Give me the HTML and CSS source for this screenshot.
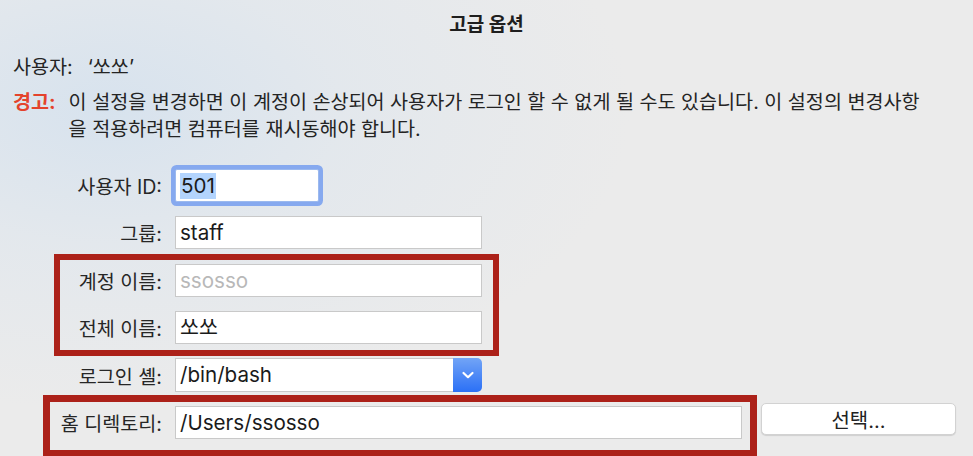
FILE: index.html
```html
<!DOCTYPE html>
<html lang="ko">
<head>
<meta charset="utf-8">
<link rel="stylesheet" href="styles.css">
</head>
<body>
<div class="window">
  <div class="title">고급 옵션</div>
  <div class="user-line"><span>사용자:</span><span class="user-name">‘쏘쏘’</span></div>
  <div class="warning">
    <span class="warn-label">경고:</span>
    <p class="warn-text">이 설정을 변경하면 이 계정이 손상되어 사용자가 로그인 할 수 없게 될 수도 있습니다. 이 설정의 변경사항<br>을 적용하려면 컴퓨터를 재시동해야 합니다.</p>
  </div>
  <div class="form">
    <div class="row">
      <label class="label">사용자 ID:</label>
      <div class="input input-id focused"><span class="sel">501</span></div>
    </div>
    <div class="row">
      <label class="label">그룹:</label>
      <div class="input input-wide">staff</div>
    </div>
    <div class="row">
      <label class="label">계정 이름:</label>
      <div class="input input-wide disabled">ssosso</div>
    </div>
    <div class="row">
      <label class="label">전체 이름:</label>
      <div class="input input-wide">쏘쏘</div>
    </div>
    <div class="row">
      <label class="label">로그인 셸:</label>
      <div class="select">
        <div class="select-value">/bin/bash</div>
        <div class="select-btn">
          <svg width="14" height="10" viewBox="0 0 14 10"><path d="M2.5 3 L7 7.2 L11.5 3" fill="none" stroke="#fff" stroke-width="2.2" stroke-linecap="round" stroke-linejoin="round"/></svg>
        </div>
      </div>
    </div>
    <div class="row">
      <label class="label">홈 디렉토리:</label>
      <div class="input input-home">/Users/ssosso</div>
      <button class="btn">선택...</button>
    </div>
  </div>
  <div class="mark mark-names"></div>
  <div class="mark mark-home"></div>
</div>
</body>
</html>
```
FILE: styles.css
```css
* { box-sizing: border-box; }
html, body { margin: 0; padding: 0; }
body {
  width: 973px;
  height: 456px;
  overflow: hidden;
  font-family: Inter, "Noto Sans CJK KR", sans-serif;
  font-size: 19.6px;
  color: #242424;
}
.window {
  position: relative;
  width: 973px;
  height: 456px;
  overflow: hidden;
  background:
    radial-gradient(ellipse 520px 300px at 110px 110px, rgba(214,226,238,0.95) 0%, rgba(222,230,238,0.6) 45%, rgba(235,235,235,0) 100%),
    #ebebeb;
}
.title {
  margin-top: 13px;
  height: 24px;
  line-height: 24px;
  text-align: center;
  font-weight: 700;
  font-size: 19px;
  color: #1e1e1e;
}
.user-line {
  margin-top: 18px;
  padding-left: 13px;
  height: 24px;
  line-height: 24px;
  display: flex;
  gap: 15px;
}
.warning {
  margin-top: 10px;
  padding-left: 13px;
  display: flex;
  gap: 13px;
  line-height: 27px;
}
.warn-label {
  color: #e4432c;
  font-weight: 700;
  white-space: nowrap;
}
.warn-text {
  margin: 0;
  width: 900px;
}
.form {
  margin-top: 26px;
  display: flex;
  flex-direction: column;
  gap: 14.4px;
}
.row {
  display: flex;
  align-items: center;
  height: 33px;
}
.label {
  width: 162px;
  text-align: right;
  margin-right: 13px;
  color: #262626;
}
.input {
  height: 33px;
  background: #fff;
  border: 1px solid #c9c9c9;
  padding: 0 4px;
  line-height: 31px;
  color: #1a1a1a;
  font-size: 20.6px;
}
.input-id {
  width: 144px;
}
.focused {
  border-color: #9bb9ee;
  box-shadow: 0 0 0 4px #86a9ef;
  border-radius: 2px;
}
.sel {
  background: #b3d4fd;
  display: inline-block;
  line-height: 26px;
  padding: 0 1px;
}
.input-wide { width: 307px; }
.disabled { color: #b8b8b8; }
.select {
  display: flex;
  width: 307px;
  height: 34px;
}
.select-value {
  flex: 1;
  background: #fff;
  border: 1px solid #c9c9c9;
  border-right: none;
  padding: 0 4px;
  line-height: 32px;
  color: #1a1a1a;
  font-size: 20.6px;
}
.select-btn {
  width: 29px;
  border-radius: 0 5px 5px 0;
  background: linear-gradient(#72a4f6, #2b70f6);
  display: flex;
  align-items: center;
  justify-content: center;
}
.input-home { width: 567px; }
.btn {
  margin-left: 19px;
  margin-top: -6px;
  width: 195px;
  height: 32px;
  background: #fff;
  border: 1px solid #d2d2d2;
  border-radius: 5px;
  box-shadow: 0 1px 1px rgba(0,0,0,0.12);
  font-family: Inter, "Noto Sans CJK KR", sans-serif;
  font-size: 20px;
  color: #222;
  padding: 0;
}
.mark {
  position: absolute;
  border: 7px solid #ac2119;
}
.mark-names {
  left: 54px;
  top: 254px;
  width: 445px;
  height: 102px;
  border-width: 6.5px;
}
.mark-home {
  left: 43px;
  top: 395px;
  width: 714px;
  height: 62px;
}
```
